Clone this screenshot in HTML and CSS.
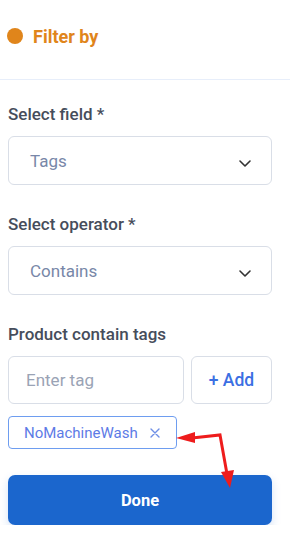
FILE: index.html
```html
<!DOCTYPE html>
<html lang="en">
<head>
    <meta charset="UTF-8">
    <meta name="viewport" content="width=device-width, initial-scale=1.0">
    <title>Filter by</title>
    <link rel="stylesheet" href="styles.css">
</head>
<body>
    <div id="filter-panel">
        <div class="panel-header">
            <span class="dot"></span>
            <h2>Filter by</h2>
        </div>

        <div class="panel-body">
            <div class="field">
                <label>Select field *</label>
                <div class="select-box">
                    <span>Tags</span>
                    <svg class="chevron" width="12" height="7" viewBox="0 0 12 7"><path d="M1 1l5 5 5-5" fill="none" stroke="#333" stroke-width="1.6" stroke-linecap="round" stroke-linejoin="round"/></svg>
                </div>
            </div>

            <div class="field">
                <label>Select operator *</label>
                <div class="select-box">
                    <span>Contains</span>
                    <svg class="chevron" width="12" height="7" viewBox="0 0 12 7"><path d="M1 1l5 5 5-5" fill="none" stroke="#333" stroke-width="1.6" stroke-linecap="round" stroke-linejoin="round"/></svg>
                </div>
            </div>

            <div class="field field-tags">
                <label>Product contain tags</label>
                <div class="tag-input-row">
                    <input type="text" class="tag-input" placeholder="Enter tag">
                    <button class="add-btn">+ Add</button>
                </div>
            </div>

            <div class="tags-and-done">
                <div class="tag-list">
                    <span class="tag-chip">NoMachineWash
                        <svg width="10" height="10" viewBox="0 0 10 10"><path d="M1 1l8 8M9 1l-8 8" stroke="#6f8fe6" stroke-width="1.4" stroke-linecap="round"/></svg>
                    </span>
                </div>
                <button class="done-btn">Done</button>

                <!-- annotation arrow drawn over the content -->
                <svg class="annotation" width="80" height="80" viewBox="0 0 80 80">
                    <path d="M24 22 L52 19 L59 58" fill="none" stroke="#ee1c1c" stroke-width="3" stroke-linejoin="miter"/>
                    <path d="M8 22 L27 16 L27 27 Z" fill="#ee1c1c"/>
                    <path d="M53 56 L66 54 L62 72 Z" fill="#ee1c1c"/>
                </svg>
            </div>
        </div>
    </div>
</body>
</html>
```

FILE: styles.css
```css
body {
    margin: 0;
    padding: 0;
    background: #fff;
    font-family: Roboto, "Noto Sans", Arial, sans-serif;
}

#filter-panel {
    width: 290px;
}

.panel-header {
    display: flex;
    align-items: center;
    gap: 10px;
    height: 72px;
    padding: 0 0 7px 7px;
    border-bottom: 1px solid #e7eefa;
}

.dot {
    width: 16px;
    height: 16px;
    border-radius: 50%;
    background: #e0851b;
}

.panel-header h2 {
    margin: 0;
    font-size: 18px;
    font-weight: 700;
    color: #e0851b;
}

.panel-body {
    padding: 24px 18px 0 8px;
}

.field {
    display: flex;
    flex-direction: column;
    gap: 12px;
    margin-bottom: 29px;
}

.field-tags {
    margin-bottom: 12px;
}

.field label {
    font-size: 17px;
    line-height: 20px;
    font-weight: 500;
    color: #464d5b;
}

.select-box {
    display: flex;
    align-items: center;
    justify-content: space-between;
    height: 47px;
    padding: 0 20px 0 21px;
    border: 1px solid #d9dee7;
    border-radius: 6px;
    font-size: 17px;
    color: #7887a8;
}

.chevron {
    margin-top: 5px;
}

.tag-input-row {
    display: flex;
    gap: 7px;
}

.tag-input {
    flex: 1;
    min-width: 0;
    height: 48px;
    box-sizing: border-box;
    padding: 0 17px;
    border: 1px solid #d9dee7;
    border-radius: 6px;
    font-family: inherit;
    font-size: 17px;
    color: #333;
}

.tag-input::placeholder {
    color: #9aa3b5;
}

.add-btn {
    width: 81px;
    height: 48px;
    padding: 0;
    border: 1px solid #d9dee7;
    border-radius: 6px;
    background: #fff;
    font-family: inherit;
    font-size: 17.5px;
    font-weight: 500;
    color: #3b6fe3;
}

.tags-and-done {
    position: relative;
}

.tag-list {
    display: flex;
    margin-bottom: 26px;
}

.tag-chip {
    display: flex;
    align-items: center;
    gap: 12px;
    height: 31px;
    padding: 0 16px 0 15px;
    border: 1px solid #6e9df0;
    border-radius: 4px;
    font-size: 15px;
    color: #5d7be6;
}

.done-btn {
    width: 100%;
    height: 50px;
    border: none;
    border-radius: 7px;
    background: #1b66cd;
    font-family: inherit;
    font-size: 16.5px;
    font-weight: 700;
    color: #fff;
    box-shadow: 0 4px 10px rgba(27, 102, 205, 0.18);
}

.annotation {
    position: absolute;
    left: 160px;
    top: 0;
    pointer-events: none;
}
```
